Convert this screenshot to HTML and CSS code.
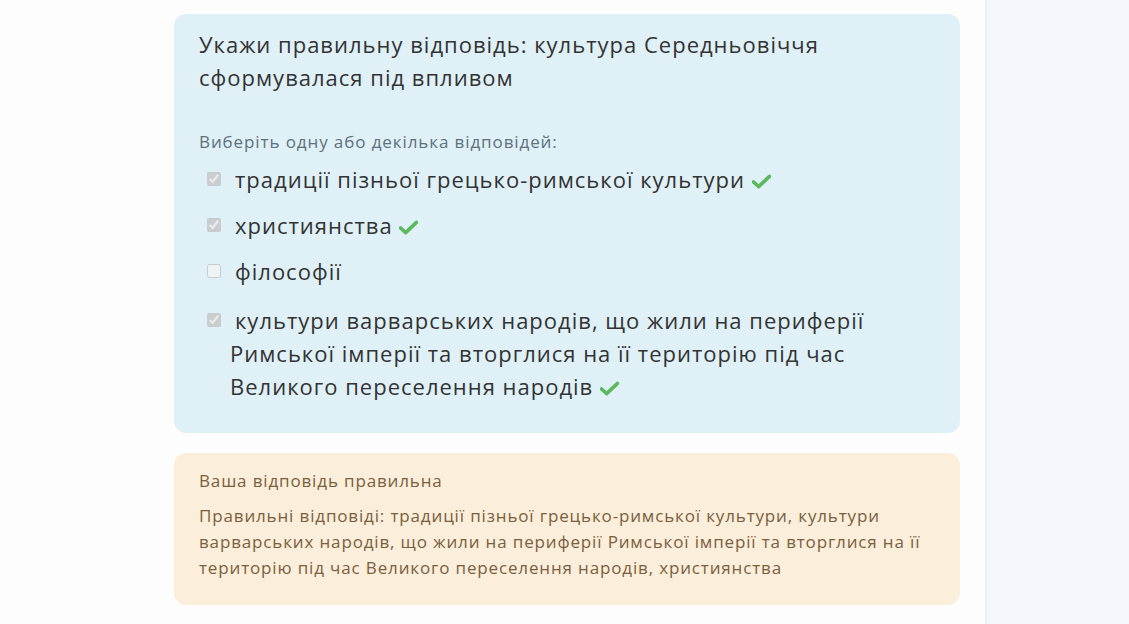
FILE: index.html
```html
<!DOCTYPE html>
<html lang="uk">
<head>
<meta charset="utf-8">
<title>Тест</title>
<link rel="stylesheet" href="styles.css">
</head>
<body>
<div class="page">
  <main class="main">
    <section class="question">
      <h2 class="q-title">Укажи правильну відповідь: культура Середньовіччя сформувалася під впливом</h2>
      <p class="hint">Виберіть одну або декілька відповідей:</p>
      <ul class="options">
        <li class="option"><input type="checkbox" class="cb" checked disabled>традиції пізньої грецько-римської культури <svg class="ok" viewBox="0 0 20 16"><path d="M1.5 8.5 L7 13.5 L18.5 2.5" fill="none" stroke="#5cb85c" stroke-width="3.8" stroke-linecap="round" stroke-linejoin="round"/></svg></li>
        <li class="option"><input type="checkbox" class="cb" checked disabled>християнства <svg class="ok" viewBox="0 0 20 16"><path d="M1.5 8.5 L7 13.5 L18.5 2.5" fill="none" stroke="#5cb85c" stroke-width="3.8" stroke-linecap="round" stroke-linejoin="round"/></svg></li>
        <li class="option"><input type="checkbox" class="cb" disabled>філософії</li>
        <li class="option"><input type="checkbox" class="cb" checked disabled>культури варварських народів, що жили на периферії Римської імперії та вторглися на її територію під час Великого переселення народів <svg class="ok" viewBox="0 0 20 16"><path d="M1.5 8.5 L7 13.5 L18.5 2.5" fill="none" stroke="#5cb85c" stroke-width="3.8" stroke-linecap="round" stroke-linejoin="round"/></svg></li>
      </ul>
    </section>
    <section class="feedback">
      <p class="fb-title">Ваша відповідь правильна</p>
      <p class="fb-text">Правильні відповіді: традиції пізньої грецько-римської культури, культури варварських народів, що жили на периферії Римської імперії та вторглися на її територію під час Великого переселення народів, християнства</p>
    </section>
  </main>
  <aside class="sidebar"></aside>
</div>
</body>
</html>
```

FILE: styles.css
```css
* { box-sizing: border-box; }
html, body { margin: 0; padding: 0; height: 100%; }
body {
  font-family: "Open Sans", "Noto Sans", sans-serif;
  background: #fdfdfd;
  color: #333;
  overflow: hidden;
}
.page {
  display: flex;
  height: 624px;
}
.main {
  width: 985px;
  flex: none;
  padding: 14px 25px 0 174px;
  display: flex;
  flex-direction: column;
  gap: 20px;
}
.sidebar {
  flex: 1;
  background: #f4f8fd;
  border-left: 2px solid #e9eff6;
}
.question {
  background: #dff1f7;
  border-radius: 12px;
  padding: 14px 25px 30px 25px;
}
.q-title {
  margin: 0;
  font-weight: 400;
  font-size: 22px;
  line-height: 33px;
  color: #333;
  letter-spacing: 1px;
}
.hint {
  margin: 36px 0 0;
  font-size: 17px;
  line-height: 24px;
  color: #5d707c;
  letter-spacing: 0.9px;
}
.options {
  list-style: none;
  margin: 0;
  padding: 0;
}
.option {
  font-size: 22px;
  line-height: 33px;
  padding-left: 31px;
  text-indent: -23px;
  margin-top: 13px;
  letter-spacing: 1px;
}
.option:first-child { margin-top: 9px; }
.option:last-child { margin-top: 16px; }
.cb {
  width: 14px;
  height: 14px;
  margin: 0 14px 0 0;
  vertical-align: 2px;
}
.ok {
  width: 19px;
  height: 15px;
  vertical-align: -1px;
  text-indent: 0;
}
.feedback {
  background: #fbeedb;
  border-radius: 12px;
  padding: 16px 25px 24px 25px;
  color: #7a5f3e;
}
.fb-title {
  margin: 0;
  font-size: 17px;
  line-height: 24px;
  letter-spacing: 0.85px;
}
.fb-text {
  margin: 10px 0 0;
  font-size: 17px;
  line-height: 26px;
  letter-spacing: 0.85px;
}
```
